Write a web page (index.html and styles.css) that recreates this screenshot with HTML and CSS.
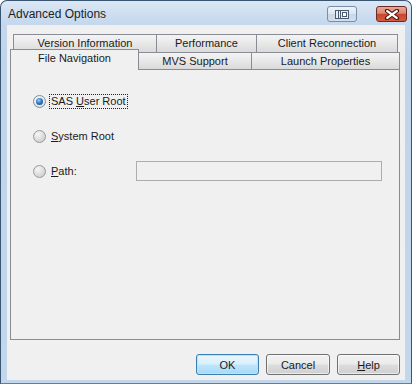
FILE: index.html
```html
<!DOCTYPE html>
<html>
<head>
<meta charset="utf-8">
<link rel="stylesheet" href="styles.css">
</head>
<body>
<div class="window">
  <div class="titlebar">
    <span class="title">Advanced Options</span>
    <div class="tbtn dock">
      <svg width="14" height="9" viewBox="0 0 14 9">
        <rect x="0.5" y="0.5" width="13" height="8" fill="#e9eef5" stroke="#4a5b70"/>
        <line x1="3.5" y1="1" x2="3.5" y2="8" stroke="#4a5b70"/>
        <line x1="5.5" y1="1" x2="5.5" y2="8" stroke="#4a5b70"/>
        <rect x="7.5" y="2.5" width="4" height="4" fill="#fff" stroke="#4a5b70"/>
      </svg>
    </div>
    <div class="tbtn close">
      <svg width="16" height="11" viewBox="0 0 16 11">
        <path d="M3 1.8 L13 9.2 M13 1.8 L3 9.2" stroke="#4a1712" stroke-width="4.2" stroke-linecap="round"/>
        <path d="M3.3 2.1 L12.7 8.9 M12.7 2.1 L3.3 8.9" stroke="#fff" stroke-width="2.4" stroke-linecap="round"/>
      </svg>
    </div>
  </div>
  <div class="client">
    <div class="tabs">
      <div class="row top">
        <div class="tab t1">Version Information</div>
        <div class="tab t2">Performance</div>
        <div class="tab t3">Client Reconnection</div>
      </div>
      <div class="row bottom">
        <div class="tab sel">File Navigation</div>
        <div class="tab b2">MVS Support</div>
        <div class="tab b3">Launch Properties</div>
      </div>
    </div>
    <div class="panel">
      <div class="opt">
        <span class="radio on"></span>
        <span class="label focus">SAS <u>U</u>ser Root</span>
      </div>
      <div class="opt">
        <span class="radio"></span>
        <span class="label"><u>S</u>ystem Root</span>
      </div>
      <div class="opt">
        <div class="optlead">
          <span class="radio"></span>
          <span class="label"><u>P</u>ath:</span>
        </div>
        <div class="field"></div>
      </div>
    </div>
    <div class="buttons">
      <div class="btn def">OK</div>
      <div class="btn cancel">Cancel</div>
      <div class="btn help"><u>H</u>elp</div>
    </div>
  </div>
</div>
</body>
</html>
```

FILE: styles.css
```css
html, body {
  margin: 0;
  padding: 0;
  background: #ffffff;
}
body {
  font-family: "Liberation Sans", Arial, sans-serif;
  font-size: 11px;
  color: #000;
}
.window {
  width: 412px;
  height: 384px;
  box-sizing: border-box;
  border: 1px solid #3a5572;
  border-bottom-color: #4f86b0;
  border-radius: 7px 7px 0 0;
  background: linear-gradient(180deg, #dbe7f4 0px, #c5d8ed 22px, #c0d4ea 60px, #c3d7ec 100%);
  padding: 0 6px 3px 6px;
  display: flex;
  flex-direction: column;
}
.titlebar {
  height: 24px;
  display: flex;
  align-items: center;
}
.title {
  font-size: 12px;
  margin-left: 1px;
  margin-top: 1px;
  flex: 1;
  color: #1e1e1e;
}
.tbtn {
  height: 16px;
  box-sizing: border-box;
  border-radius: 3px;
  display: flex;
  align-items: center;
  justify-content: center;
  margin-top: 2px;
}
.dock {
  width: 30px;
  border: 1px solid #7a8ea8;
  background: linear-gradient(180deg, #eef3fa 0%, #dbe5f1 50%, #c8d6e7 51%, #d3dfee 100%);
  margin-right: 19px;
}
.close {
  width: 31px;
  margin-right: -2px;
  border: 1px solid #6b2a22;
  background: linear-gradient(180deg, #eaa896 0%, #dd8671 45%, #c8472f 52%, #d45a3f 100%);
}
.client {
  flex: 1;
  background: #f0f0f0;
  padding: 9px 5px 0 3px;
  display: flex;
  flex-direction: column;
}
.tabs {
  display: flex;
  flex-direction: column;
}
.row {
  display: flex;
}
.row.top {
  margin-left: 3px;
  height: 18px;
}
.row.bottom {
  height: 17px;
  align-items: flex-start;
}
.tab {
  box-sizing: border-box;
  border: 1px solid #898c95;
  background: linear-gradient(180deg, #f4f4f4 0%, #e8e8e8 50%, #dadada 100%);
  display: flex;
  justify-content: center;
  align-items: center;
  white-space: nowrap;
  color: #1a1a1a;
}
.row.top .tab {
  border-bottom: none;
  height: 18px;
  padding-bottom: 1px;
}
.t1 { width: 144px; }
.t2 { width: 101px; margin-left: -1px; }
.t3 { width: 142px; margin-left: -1px; }
.row.bottom .tab {
  height: 17px;
  border-bottom: none;
}
.row.bottom .tab.sel {
  width: 129px;
  height: 21px;
  margin-top: -3px;
  background: #f0f0f0;
  position: relative;
  z-index: 1;
  padding-bottom: 4px;
}
.b2 { width: 114px; margin-left: -1px; }
.b3 { width: 149px; margin-left: -1px; }
.panel {
  width: 390px;
  height: 271px;
  box-sizing: border-box;
  border: 1px solid #898c95;
  background: #f0f0f0;
  padding: 21px 0 0 22px;
  display: flex;
  flex-direction: column;
  gap: 15px;
}
.opt {
  height: 20px;
  display: flex;
  align-items: center;
}
.optlead {
  width: 103px;
  display: flex;
  align-items: center;
}
.radio {
  width: 13px;
  height: 13px;
  box-sizing: border-box;
  border-radius: 50%;
  border: 1px solid #9a9a9a;
  background: radial-gradient(circle at 35% 30%, #f6f6f6 0%, #dedede 50%, #c4c4c4 100%);
  display: inline-flex;
  align-items: center;
  justify-content: center;
  flex: none;
}
.radio.on {
  border-color: #7d8f9f;
  background: radial-gradient(circle at 40% 35%, #ffffff 0%, #e6e6e6 60%, #cfcfcf 100%);
}
.radio.on::after {
  content: "";
  width: 7px;
  height: 7px;
  border-radius: 50%;
  background: radial-gradient(circle at 40% 35%, #9fd0f3 0%, #2f7bbf 45%, #123f70 100%);
}
.label {
  margin-left: 3px;
  line-height: 13px;
  padding: 0 1px;
  border: 1px dotted transparent;
  color: #1a1a1a;
}
.label.focus {
  border-color: #222;
}
.field {
  width: 246px;
  height: 20px;
  box-sizing: border-box;
  border: 1px solid #adadad;
  background: #f0f0f0;
}
.buttons {
  display: flex;
  justify-content: flex-end;
  gap: 7px;
  margin-top: 14px;
}
.btn {
  height: 21px;
  box-sizing: border-box;
  border: 1px solid #707070;
  border-radius: 3px;
  background: linear-gradient(180deg, #f2f2f2 0%, #ebebeb 48%, #dddddd 52%, #cfcfcf 100%);
  display: flex;
  align-items: center;
  justify-content: center;
  box-shadow: inset 0 0 0 1px rgba(255,255,255,0.6);
  color: #1a1a1a;
}
.def {
  width: 63px;
  border-color: #3c7fb1;
  background: linear-gradient(180deg, #eaf6fd 0%, #d9f0fc 48%, #bee6fd 52%, #a7d9f5 100%);
  box-shadow: inset 0 0 0 1px #b7e4fb;
}
.cancel { width: 64px; }
.help { width: 63px; }
u {
  text-decoration: underline;
  text-underline-offset: 1px;
}
```
